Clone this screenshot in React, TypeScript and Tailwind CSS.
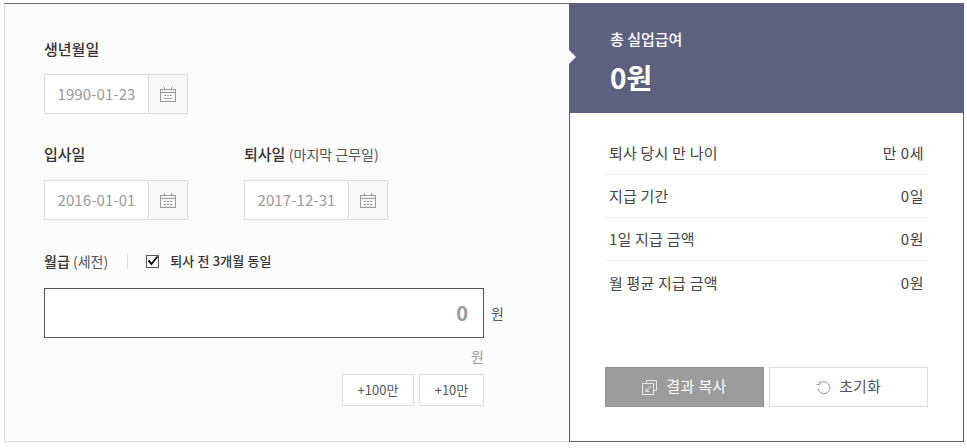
import React from "react";

function Cal() {
  return (
    <svg width="16" height="15" viewBox="0 0 16 15" fill="none" stroke="#9a9a9a" strokeWidth="1">
      <rect x="0.5" y="2.5" width="15" height="12" />
      <path d="M0.5 5.5H15.5M4.5 0V2.5M11.5 0V2.5" />
      <path d="M4 8.5H6M7 8.5H9M10 8.5H12M4 11.5H6M7 11.5H9M10 11.5H12" />
    </svg>
  );
}

function DateBox({ value }: { value: string }) {
  return (
    <div className="flex h-10 w-[144px] border border-[#dcdcdc] bg-white">
      <div className="flex w-[104px] items-center justify-center border-r border-[#dcdcdc] text-[15px] tracking-[0.1px] text-[#999999]">
        {value}
      </div>
      <div className="flex flex-1 items-center justify-center bg-[#f8f8f8]">
        <Cal />
      </div>
    </div>
  );
}

function Row({ k, v, last }: { k: string; v: string; last?: boolean }) {
  return (
    <div className={`flex h-[43px] items-center justify-between pl-[5px] pr-[5px] pt-px text-[15px] tracking-[0.2px] text-[#444444] ${last ? "" : "border-b border-[#f3f3f3]"}`}>
      <span>{k}</span>
      <span className="tracking-[0.5px]">{v}</span>
    </div>
  );
}

export default function App() {
  return (
    <div className="h-[448px] w-[967px] bg-white pl-1 pt-[3px] font-['Noto_Sans_CJK_KR','Liberation_Sans',sans-serif]">
      <div className="flex h-[439px] w-[960px]">
        <div className="h-full w-[565px] border-b border-l border-t border-b-[#dddddd] border-l-[#dddddd] border-t-[#666666] bg-[#fcfcfc] pl-[39px] pt-[34px]">
          <div className="text-[15px] font-medium leading-[22px] text-[#333333]">생년월일</div>
          <div className="mt-[14px]"><DateBox value="1990-01-23" /></div>

          <div className="mt-[29px] flex">
            <div className="w-[200px]">
              <div className="text-[15px] font-medium leading-[22px] text-[#333333]">입사일</div>
              <div className="mt-[15px]"><DateBox value="2016-01-01" /></div>
            </div>
            <div>
              <div className="text-[15px] font-medium leading-[22px] text-[#333333]">
                퇴사일 <span className="text-[14px] font-normal text-[#555555]">(마지막 근무일)</span>
              </div>
              <div className="mt-[15px]"><DateBox value="2017-12-31" /></div>
            </div>
          </div>

          <div className="mt-[30px] flex h-[22px] items-center">
            <span className="text-[14px] font-medium text-[#333333]">월급 <span className="text-[14px] font-normal text-[#555555]">(세전)</span></span>
            <span className="ml-[19px] h-[15px] w-px bg-[#dddddd]"></span>
            <span className="ml-[18px] flex h-[13px] w-[13px] items-center justify-center border border-[#555555] bg-white">
              <svg width="12" height="11" viewBox="0 0 12 11" className="mt-[-1px] shrink-0" fill="none" stroke="#111111" strokeWidth="2">
                <path d="M1.5 5.5L4.5 9L10.5 1.5" />
              </svg>
            </span>
            <span className="ml-[11px] text-[13px] font-medium tracking-[0.15px] text-[#333333]">퇴사 전 3개월 동일</span>
          </div>

          <div className="mt-[16px] flex items-center">
            <div className="flex h-[50px] w-[440px] items-center justify-end border border-[#555555] bg-white pr-[15px] text-[20px] font-bold text-[#999999]">0</div>
            <span className="ml-[7px] text-[14px] text-[#555555]">원</span>
          </div>

          <div className="mt-[8px] w-[440px] text-right text-[14px] leading-[20px] text-[#999999]">원</div>

          <div className="mt-[8px] flex w-[440px] justify-end gap-[5px]">
            <div className="flex h-8 w-[72px] items-center justify-center border border-[#dddddd] bg-white text-[13px] text-[#555555]">+100만</div>
            <div className="flex h-8 w-[65px] items-center justify-center border border-[#dddddd] bg-white text-[13px] text-[#555555]">+10만</div>
          </div>
        </div>

        <div className="flex h-full w-[395px] flex-col border-b border-l border-r border-[#5e6080] bg-white">
          <div className="relative h-[110px] shrink-0 bg-[#5e6080] pl-[40px] pt-[25px] text-white">
            <span className="absolute left-[-1px] top-[47px] h-0 w-0 border-y-[7px] border-l-[7px] border-y-transparent border-l-[#fcfcfc]"></span>
            <div className="text-[15px] font-medium leading-[22px]">총 실업급여</div>
            <div className="mt-[9px] text-[28px] font-bold leading-[36px]">0원</div>
          </div>
          <div className="mx-[34px] mt-[19px]">
            <Row k="퇴사 당시 만 나이" v="만 0세" />
            <Row k="지급 기간" v="0일" />
            <Row k="1일 지급 금액" v="0원" />
            <Row k="월 평균 지급 금액" v="0원" last />
          </div>
          <div className="mx-[35px] mt-auto mb-[34px] flex gap-[5px]">
            <div className="flex h-10 w-[159px] items-center justify-center gap-[9px] border border-[#909090] bg-[#9c9c9c] pb-[2px] text-[15px] tracking-[0.4px] text-white">
              <svg width="15" height="15" viewBox="0 0 15 15" fill="none" stroke="#e8e8e8" strokeWidth="1" className="mt-[2px]">
                <path d="M4.5 3.5V0.5H14.5V10.5H11.5" />
                <rect x="0.5" y="3.5" width="11" height="11" />
                <path d="M9 6L4.5 11M4 8V11.5H7.5" />
              </svg>
              결과 복사
            </div>
            <div className="flex h-10 w-[159px] items-center justify-center gap-[8px] border border-[#dddddd] bg-white pb-[2px] text-[15px] text-[#555555]">
              <svg width="15" height="15" viewBox="0 0 15 15" fill="none" stroke="#999999" strokeWidth="1" className="mt-[2px]">
                <path d="M3.2 4A6 6 0 1 1 2 8.5" />
                <path d="M0.5 4.5H3.8V1" />
              </svg>
              초기화
            </div>
          </div>
        </div>
      </div>
    </div>
  );
}
